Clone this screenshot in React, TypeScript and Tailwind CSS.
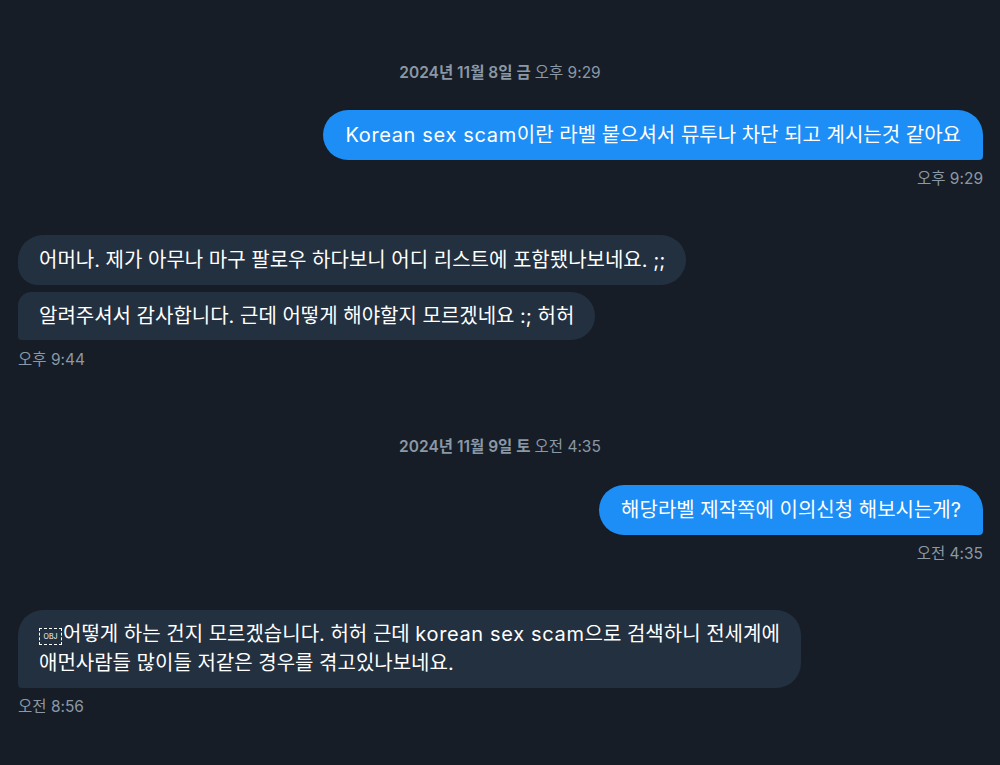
const font = {
  fontFamily: 'Inter, "Noto Sans CJK KR", sans-serif',
};

function DateHeader({ date, time }: { date: string; time: string }) {
  return (
    <div className="flex justify-center text-[15.5px] leading-[20px] text-[#8b98a5]">
      <span className="font-semibold">{date}</span>
      <span className="ml-1">{time}</span>
    </div>
  );
}

function Sent({ children, time }: { children: React.ReactNode; time: string }) {
  return (
    <div className="flex flex-col items-end">
      <div className="bg-[#1d8ef5] text-white text-[20px] leading-[24px] px-[22px] py-[13px] rounded-[25px] rounded-br-[4px]">
        {children}
      </div>
      <div className="mt-[9px] text-[15.5px] leading-[20px] text-[#8b98a5]">{time}</div>
    </div>
  );
}

function Latin({ children }: { children: React.ReactNode }) {
  return <span className="tracking-[0.65px]">{children}</span>;
}

function ObjBox() {
  return (
    <span className="inline-flex items-center justify-center align-[2px] w-[23px] h-[17px] border border-dashed border-white text-[7px] leading-none mr-px">
      OBJ
    </span>
  );
}

export default function App() {
  return (
    <div className="min-h-screen w-full bg-[#161d27] px-[17px] pt-[63px]" style={font}>
      <DateHeader date="2024년 11월 8일 금" time="오후 9:29" />

      <div className="mt-[27px]">
        <Sent time="오후 9:29">
          <Latin>Korean sex scam</Latin>이란 라벨 붙으셔서 뮤투나 차단 되고 계시는것 같아요
        </Sent>
      </div>

      <div className="mt-[46px] flex flex-col items-start pl-px">
        <div className="bg-[#233040] text-white text-[20px] leading-[24px] px-[21px] py-[13px] rounded-[25px] rounded-bl-[20px]">
          어머나. 제가 아무나 마구 팔로우 하다보니 어디 리스트에 포함됐나보네요. ;;
        </div>
        <div className="mt-[7px] bg-[#233040] text-white text-[20px] leading-[24px] px-[21px] py-[12px] rounded-[25px] rounded-tl-[14px] rounded-bl-[4px]">
          알려주셔서 감사합니다. 근데 어떻게 해야할지 모르겠네요 :; 허허
        </div>
        <div className="mt-[10px] text-[15.5px] leading-[20px] text-[#8b98a5]">오후 9:44</div>
      </div>

      <div className="mt-[67px]">
        <DateHeader date="2024년 11월 9일 토" time="오전 4:35" />
      </div>

      <div className="mt-[28px]">
        <Sent time="오전 4:35">해당라벨 제작쪽에 이의신청 해보시는게?</Sent>
      </div>

      <div className="mt-[46px] flex flex-col items-start pl-px">
        <div className="bg-[#233040] text-white text-[20px] leading-[29px] px-[21px] py-[10px] rounded-[25px] rounded-bl-[4px]">
          <ObjBox />
          어떻게 하는 건지 모르겠습니다. 허허 근데 <Latin>korean sex scam</Latin>으로 검색하니 전세계에
          <br />
          애먼사람들 많이들 저같은 경우를 겪고있나보네요.
        </div>
        <div className="mt-[9px] text-[15.5px] leading-[20px] text-[#8b98a5]">오전 8:56</div>
      </div>
    </div>
  );
}
